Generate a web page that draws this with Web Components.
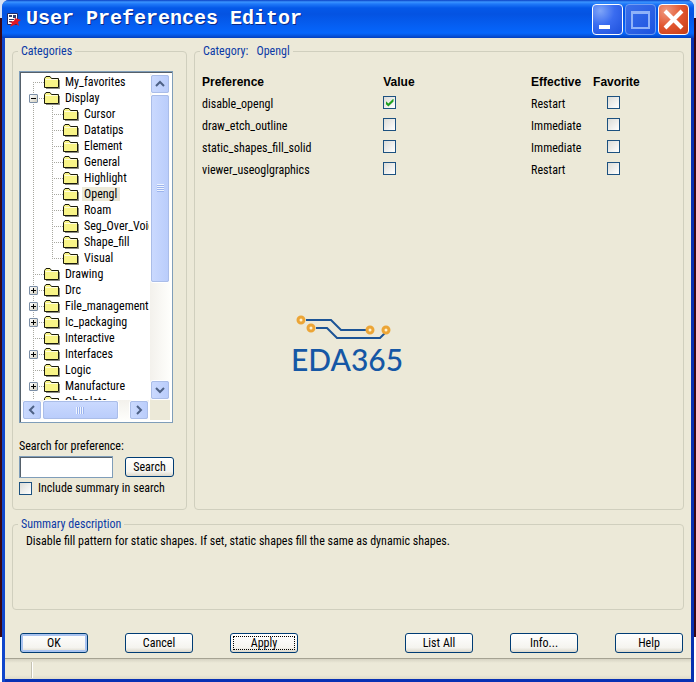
<!DOCTYPE html>
<html lang="en">
<head>
<meta charset="utf-8">
<title>User Preferences Editor</title>
<style>
body{margin:0;font:12px/14px "Roboto Condensed","Liberation Sans",Arial,sans-serif;color:#000}
</style>
</head>
<body>
<pref-editor></pref-editor>
<script>
const define = (name, html, init) => {
  const t = document.createElement('template');
  t.innerHTML = html;
  customElements.define(name, class extends HTMLElement {
    connectedCallback() {
      if (this.shadowRoot) return;
      this.attachShadow({mode: 'open'}).append(t.content.cloneNode(true));
      if (init) init(this, this.shadowRoot);
    }
  });
};

define('title-bar', `
<style>
:host{display:flex;align-items:center;flex:none;height:38px;padding:0 5px 0 1px;box-sizing:border-box;
 background:linear-gradient(#0a3fc4 0,#3a94ff 2px,#1f78f8 4px,#0458e8 8px,#0453e2 14px,#0560f4 27px,#0566fc 33px,#0559e6 35px,#0340be 38px);border-radius:7px 7px 0 0}
.app{flex:none;width:17px;height:17px;margin:0 3px}
h1{flex:1;margin:0;font:bold 20px/26px "Liberation Mono",monospace;color:#fff;text-shadow:1px 1px #0a2a88;white-space:nowrap}
.set{display:flex;gap:2px}
button{width:31px;height:31px;padding:0;border:1px solid #fff;border-radius:4px;background:radial-gradient(circle at 25% 20%,#7fa5f8,#3a6cf0 45%,#1d50dc);display:grid;place-items:center}
button:disabled{border-color:#6f9cf2;background:linear-gradient(135deg,#3c70ea,#1c53e0)}
button.close{border-color:#fff;background:radial-gradient(circle at 25% 20%,#f09a80,#e1552f 50%,#c53c14)}
button svg{display:block}
</style>
<svg class="app" viewBox="0 0 17 17"><path d="M1.500 2.500h10v11h-10z" fill="#fff" stroke="#222a66"/><path d="M3 4h3v2H3zM7 4h3v3H7zM3 8h5v1H3zM3 10h3v1H3z" fill="#33406f"/><path d="M16 3l-4 5 3 1-3 2 1 4-3-2-6 3 2-4-3-1 5-1 1-3 3 1z" fill="#e01825"/></svg>
<h1><slot></slot></h1>
<div class="set">
<button type="button" aria-label="Minimize"><svg width="29" height="29"><path d="M6 20h11v4H6z" fill="#fff"/></svg></button>
<button type="button" aria-label="Maximize" disabled><svg width="29" height="29"><path d="M6 7h17v16H6zM6 8h17" fill="none" stroke="#8fb2f8" stroke-width="2"/></svg></button>
<button type="button" class="close" aria-label="Close"><svg width="29" height="29"><path d="M6 6l17 17M23 6L6 23" stroke="#fff" stroke-width="4"/></svg></button>
</div>`);

define('group-box', `
<style>
:host{display:flex;flex-direction:column;min-width:0;min-height:0}
fieldset{flex:1;min-width:0;min-height:0;margin:0;padding:0;border:1px solid #d0cfbe;border-radius:4px;display:flex;flex-direction:column}
legend{margin-left:5px;padding:0 3px;height:14px;color:#0b3aa6;white-space:pre}
</style>
<fieldset><legend></legend><slot></slot></fieldset>`,
(h, r) => { r.querySelector('legend').textContent = h.getAttribute('label'); });

define('xp-button', `
<style>
:host{display:block}
button{display:block;width:100%;height:20px;padding:0;font:inherit;line-height:18px;color:#000;border:1px solid #003c74;border-radius:3px;
 background:linear-gradient(#fff,#f5f4ef 75%,#dcd8cc)}
:host([default]) button{box-shadow:inset 0 0 0 2px #a9c3f0}
:host([focused]) button{outline:1px dotted #000;outline-offset:-4px}
</style>
<button type="button"><slot></slot></button>`);

define('xp-check', `
<style>
:host{display:block}
label{display:flex;align-items:center;gap:6px}
input{appearance:none;flex:none;width:13px;height:13px;margin:0;border:1px solid #1c5180;background:linear-gradient(135deg,#dcdcd7,#fff);display:grid;place-items:center}
input:checked::before{content:"";width:9px;height:8px;background:#21a121;clip-path:polygon(8% 35%,35% 62%,92% 0,92% 38%,35% 100%,8% 72%)}
</style>
<label><input type="checkbox"><slot></slot></label>`,
(h, r) => {
  const i = r.querySelector('input');
  i.checked = h.hasAttribute('checked');
  if (h.hasAttribute('name')) i.setAttribute('aria-label', h.getAttribute('name'));
});

define('scroll-bar', `
<style>
:host{display:flex;flex-direction:column;background:linear-gradient(90deg,#f3f1ec,#fefefb)}
:host([horizontal]){flex-direction:row;background:linear-gradient(#f3f1ec,#fefefb)}
button,.thumb{box-sizing:border-box;border:1px solid #fff;outline:1px solid #aabde8;outline-offset:-2px;border-radius:3px;background:linear-gradient(90deg,#cbdafe,#b9ccfb);padding:0;display:grid;place-items:center}
button{flex:none;width:20px;height:20px}
.track{flex:1;display:flex;flex-direction:inherit;min-width:0;min-height:0}
.thumb{flex:none;width:20px;height:66%}
:host([horizontal]) .thumb{width:88%;height:20px;background:linear-gradient(#cbdafe,#b9ccfb)}
.grip{width:7px;height:8px;background:repeating-linear-gradient(#eef4fe 0 1px,#9cb4ee 1px 2px)}
:host([horizontal]) .grip{width:8px;height:7px;background:repeating-linear-gradient(90deg,#eef4fe 0 1px,#9cb4ee 1px 2px)}
svg{display:block;fill:none;stroke:#4d6185;stroke-width:2}
:host([horizontal]) svg{transform:rotate(-90deg)}
</style>
<button type="button" aria-label="Scroll back"><svg width="10" height="8"><path d="M1 6l4-4 4 4"/></svg></button>
<div class="track"><div class="thumb"><div class="grip"></div></div></div>
<button type="button" aria-label="Scroll on"><svg width="10" height="8"><path d="M1 2l4 4 4-4"/></svg></button>`);

define('tree-item', `
<style>
:host{display:flex;align-items:center;height:16px;white-space:nowrap;--dots:#a8a8a0}
.gut{flex:none;align-self:stretch;width:11px;margin-left:11px;box-sizing:border-box;display:flex;align-items:center;
 background:repeating-linear-gradient(var(--dots) 0 1px,transparent 1px 2px) 0 0/1px 100% no-repeat,
 repeating-linear-gradient(90deg,var(--dots) 0 1px,transparent 1px 2px) 0 8px/11px 1px no-repeat}
:host([first]) .gut{background-position:0 8px,0 8px}
:host([child]) .gut{background-size:1px 100%,0 0}
.sub{display:none}
:host([child]) .sub{display:block;flex:none;align-self:stretch;width:11px;margin-left:8px;
 background:repeating-linear-gradient(var(--dots) 0 1px,transparent 1px 2px) 0 0/1px 100% no-repeat,
 repeating-linear-gradient(90deg,var(--dots) 0 1px,transparent 1px 2px) 0 8px/11px 1px no-repeat}
:host([last]) .sub{background-size:1px 8px,11px 1px}
button{flex:none;width:9px;height:9px;margin-left:-4px;padding:0;border:1px solid #7b8ea6;border-radius:1px;background:linear-gradient(135deg,#fff,#d2cebf)}
button svg{display:block}
.folder{flex:none}
span{margin-left:3px;padding:0 3px 0 2px}
:host([selected]) span{background:#ece9d8}
</style>
<div class="gut"></div><div class="sub"></div>
<svg class="folder" width="16" height="14" viewBox="0 0 16 14"><path d="M.5 12.500V3.500L2 1.500h4L7.500 3.500h7v9z" fill="#f8f487" stroke="#1a1a0a"/><path d="M1.500 4.500h12" stroke="#fffde0"/><path d="M15.500 5v8.500H2" fill="none" stroke="#1a1a0a" stroke-opacity=".5"/></svg>
<span><slot></slot></span>`,
(h, r) => {
  const s = h.getAttribute('state');
  if (!s) return;
  const b = document.createElement('button');
  b.type = 'button';
  b.setAttribute('aria-label', s === 'open' ? 'Collapse' : 'Expand');
  b.innerHTML = '<svg width="7" height="7" shape-rendering="crispEdges"><path fill="#000" d="M1 3h5v1H1z' + (s === 'open' ? '' : 'M3 1h1v5H3z') + '"/></svg>';
  r.querySelector('.gut').append(b);
});

define('category-tree', `
<style>
:host{display:grid;grid-template:minmax(0,1fr) 20px/minmax(0,1fr) 20px;box-sizing:border-box;border:1px solid #7f9db9;padding:2px;background:#fff;box-shadow:inset 1px 1px #55606a;gap:0 1px;min-height:0}
.list{overflow:hidden}
.corner{background:#ece9d8}
</style>
<div class="list"></div>
<scroll-bar></scroll-bar><scroll-bar horizontal></scroll-bar><div class="corner"></div>`,
(h, r) => {
  const rows = [['My_favorites','first'],['Display','state=open'],
    ...['Cursor','Datatips','Element','General','Highlight'].map(n => [n,'child']),
    ['Opengl','child selected'],['Roam','child'],['Seg_Over_Void','child'],['Shape_fill','child'],['Visual','child last'],
    ['Drawing',''],['Drc','state=shut'],['File_management','state=shut'],['Ic_packaging','state=shut'],['Interactive',''],
    ['Interfaces','state=shut'],['Logic',''],['Manufacture','state=shut'],['Obsolete','']];
  r.querySelector('.list').innerHTML = rows.map(([n, a]) => `<tree-item ${a}>${n}</tree-item>`).join('');
});

define('preference-table', `
<style>
:host{display:block}
table{width:100%;table-layout:fixed;border-collapse:collapse}
th,td{height:22px;padding:0;text-align:left;vertical-align:middle;white-space:nowrap}
th{font:bold 12px/14px "Liberation Sans",Arial,sans-serif}
td xp-check{margin-bottom:3px}
td:last-child xp-check{margin-left:14px}
</style>
<table><colgroup><col style="width:38%"><col style="width:31%"><col style="width:13%"><col></colgroup>
<thead><tr><th>Preference</th><th>Value</th><th>Effective</th><th>Favorite</th></tr></thead><tbody></tbody></table>`,
(h, r) => {
  r.querySelector('tbody').innerHTML = [['disable_opengl','Restart','checked'],['draw_etch_outline','Immediate',''],
    ['static_shapes_fill_solid','Immediate',''],['viewer_useoglgraphics','Restart','']]
    .map(([n, e, c]) => `<tr><td>${n}</td><td><xp-check name="${n}" ${c}></xp-check></td><td>${e}</td><td><xp-check name="Favorite ${n}"></xp-check></td></tr>`).join('');
});

define('brand-mark', `
<style>
:host{display:flex;flex-direction:column;width:112px}
svg{display:block;margin-left:5px}
b{font:500 30px/32px Lato,sans-serif;color:#1557a5}
</style>
<svg width="98" height="28" viewBox="0 0 98 28" fill="none"><g stroke="#1c5496" stroke-width="2"><path d="M10 5h25l10 10h25M20 13h11l10 10h43l6-6"/></g><g stroke="#eca536" stroke-width="3" fill="#fff2d0"><circle cx="5" cy="5" r="3"/><circle cx="15" cy="13" r="3"/><circle cx="74" cy="15" r="3"/><circle cx="90" cy="15" r="3"/></g></svg>
<b>EDA365</b>`);

define('status-bar', `
<style>
:host{display:flex;height:20px;border-top:1px solid #a5a292;background:linear-gradient(#d6d3c3,#ece9d8 4px,#ece9d8 16px,#dedbca)}
div{width:26px;border-right:1px solid #c5c2b2;box-shadow:1px 0 #fff;margin:3px 0 1px}
</style><div></div>`);

define('pref-editor', `
<style>
:host{display:flex;height:100vh;min-height:480px;padding:0 2px;box-sizing:border-box;background:linear-gradient(#d8e2f4 18px,#3a0612 18px,#3a0612 calc(100% - 45px),#fff calc(100% - 45px))}
main{flex:1;min-width:0;display:flex;flex-direction:column;background:#ece9d8;border-radius:7px 7px 0 0;box-shadow:inset 3px 0 #1046cc,inset -3px 0 #0830b0}
.frame{flex:1;min-height:0;display:flex;flex-direction:column;margin:0 3px;border-bottom:3px solid #0831b4}
.content{flex:1;min-height:0;display:flex;flex-direction:column;gap:7px;padding:6px 7px 5px}
.top{flex:1;min-height:0;display:flex;gap:7px}
.cats{flex:none;width:175px}
.detail{flex:1}
category-tree{flex:1;margin:13px 13px 0 6px}
.find{flex:none;padding:16px 12px 14px 6px;display:grid;grid-template-columns:1fr 49px;gap:3px 12px;align-items:center}
.find label,.find xp-check{grid-column:1/-1}
.find input{box-sizing:border-box;width:100%;min-width:0;height:22px;border:1px solid #7f9db9;box-shadow:inset 1px 1px #55606a;background:#fff;font:inherit;padding:2px 4px}
preference-table{margin:13px 4px 0 7px}
brand-mark{margin:134px 0 0 96px}
.sum{min-height:93px}
p{margin:3px 13px}
.actions{display:flex;justify-content:space-between;gap:16px;padding:16px 1px 0 8px}
.actions div{display:flex;gap:37px}
.actions xp-button{width:68px}
</style>
<main>
<title-bar>User Preferences Editor</title-bar>
<div class="frame">
<div class="content">
 <div class="top">
  <group-box class="cats" label="Categories">
   <category-tree></category-tree>
   <div class="find"><label for="q">Search for preference:</label><input id="q" type="text"><xp-button>Search</xp-button><xp-check>Include summary in search</xp-check></div>
  </group-box>
  <group-box class="detail" label="Category:   Opengl"><preference-table></preference-table><brand-mark></brand-mark></group-box>
 </div>
 <group-box class="sum" label="Summary description"><p>Disable fill pattern for static shapes. If set, static shapes fill the same as dynamic shapes.</p></group-box>
 <div class="actions"><div><xp-button default>OK</xp-button><xp-button>Cancel</xp-button><xp-button focused>Apply</xp-button></div>
 <div><xp-button>List All</xp-button><xp-button>Info...</xp-button><xp-button>Help</xp-button></div></div>
</div>
<status-bar></status-bar>
</div>
</main>`);
</script>
</body>
</html>
